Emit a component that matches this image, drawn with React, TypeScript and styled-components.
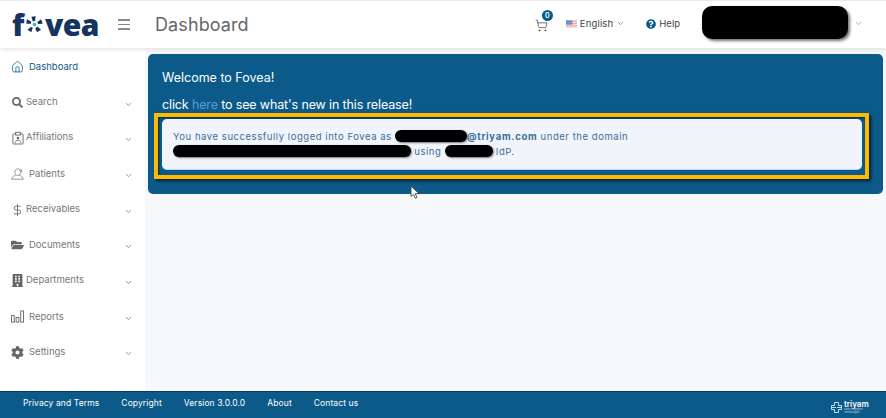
import { ReactNode } from "react";
import styled, { createGlobalStyle } from "styled-components";
import { ChevronDown, DollarSign, Home, ShoppingCart } from "lucide-react";
import {
  FaBuilding,
  FaCog,
  FaFolderOpen,
  FaQuestionCircle,
  FaSearch,
} from "react-icons/fa";

const GlobalStyle = createGlobalStyle`
  html, body {
    margin: 0;
    padding: 0;
    height: 100%;
    background: #f7f8fa;
    font-family: Inter, "Open Sans", sans-serif;
    overflow: hidden;
  }
  * { box-sizing: border-box; }
`;

const AffiliationsIcon = () => (
  <svg width="12" height="14" viewBox="0 0 13 14" fill="none" stroke="#666" strokeWidth="1">
    <rect x="1" y="2.500" width="11" height="11" rx="1" />
    <rect x="4" y="0.800" width="5" height="3" fill="#fff" />
    <circle cx="6.500" cy="7" r="1.400" fill="#666" stroke="none" />
    <path d="M3.500 12c.4-2 1.500-2.600 3-2.600s2.600.6 3 2.600" />
  </svg>
);

const PatientsIcon = () => (
  <svg width="15" height="14" viewBox="0 0 15 14" fill="none" stroke="#777" strokeWidth="0.9">
    <path d="M4.500 5c0-2.500 1.200-4 3.200-4s3.300 1.500 3.300 4c0 2-1.300 3.700-3.300 3.700S4.500 7 4.500 5z" />
    <path d="M5.300 8.300C3.500 9 1.300 10 .8 13h13.200c-.4-3-2.600-4-4.400-4.700" />
    <path d="M10.500 1.500l2.600 1.700M12.200 2.600v2" />
  </svg>
);

const ReportsIcon = () => (
  <svg width="14" height="13" viewBox="0 0 14 13" fill="none" stroke="#666" strokeWidth="1">
    <rect x="0.500" y="5.500" width="3" height="7" />
    <rect x="5.500" y="7.500" width="3" height="5" />
    <rect x="10.500" y="0.500" width="3" height="12" />
  </svg>
);

const LogoMark = () => (
  <svg width="19" height="19" viewBox="0 0 21 21">
    <g fill="#16345f">
      <path d="M8.700 7.300 7 2l4.800-.6-.6 5z" />
      <path d="M13.400 8 17.800 4.600l1.800 4.800-4.700.8z" />
      <path d="M13.700 12.800l4 3.400-4.400 3-2-4.300z" />
      <path d="M8.600 14 7 19.200 2.800 16.400l3.700-3z" />
      <path d="M6.600 9.600 1.400 9.800l.6-5 4.700 2.400z" />
    </g>
    <circle cx="10.500" cy="10.500" r="2" fill="#3fb6b0" />
  </svg>
);

const FlagIcon = () => (
  <svg width="11" height="8" viewBox="0 0 12 8">
    <rect width="12" height="8" fill="#f3a9a0" />
    <rect y="1.600" width="12" height="1.200" fill="#f8e6e3" />
    <rect y="4.200" width="12" height="1.200" fill="#f8e6e3" />
    <rect y="6.800" width="12" height="1.200" fill="#f8e6e3" />
    <rect width="7" height="4.800" fill="#6f94d6" />
  </svg>
);

const CursorIcon = () => (
  <svg width="10" height="15" viewBox="0 0 10 15">
    <path d="M1 1v10.500l2.500-2.200 1.800 4 1.700-.8-1.800-3.800H9z" fill="#fff" stroke="#333" strokeWidth="0.8" />
  </svg>
);

const TriyamMark = () => (
  <svg width="13" height="13" viewBox="0 0 13 13" fill="none" stroke="#dbe8f2" strokeWidth="0.9">
    <path d="M4.500 4.500V1.500h4v3h3v4h-3v3h-4v-3h-3v-4z" />
    <path d="M1 6.500h5M7 6.500h5" />
  </svg>
);

type NavEntry = { label: string; icon: ReactNode; wide?: boolean; active?: boolean; noArrow?: boolean };

const navItems: NavEntry[] = [
  { label: "Dashboard", icon: <Home size={14} strokeWidth={1.4} />, wide: true, active: true, noArrow: true },
  { label: "Search", icon: <FaSearch size={11} /> },
  { label: "Affiliations", icon: <AffiliationsIcon /> },
  { label: "Patients", icon: <PatientsIcon />, wide: true },
  { label: "Receivables", icon: <DollarSign size={14} strokeWidth={1.6} /> },
  { label: "Documents", icon: <FaFolderOpen size={14} />, wide: true },
  { label: "Departments", icon: <FaBuilding size={13} /> },
  { label: "Reports", icon: <ReportsIcon />, wide: true },
  { label: "Settings", icon: <FaCog size={13} />, wide: true },
];

const footerLinks = ["Privacy and Terms", "Copyright", "Version 3.0.0.0", "About", "Contact us"];

const App = () => {
  return (
    <Page>
      <GlobalStyle />
      <Header>
        <Brand>
          <LogoText>
            f<LogoMark />vea
          </LogoText>
        </Brand>
        <MenuButton>
          <span />
          <span />
          <span />
        </MenuButton>
        <Title>Dashboard</Title>
        <HeaderTools>
          <CartWrap>
            <ShoppingCart size={13} strokeWidth={1.4} color="#444" />
            <CartBadge>0</CartBadge>
          </CartWrap>
          <Language>
            <FlagIcon />
            <span>English</span>
            <ChevronDown size={9} color="#777" />
          </Language>
          <Help>
            <FaQuestionCircle size={10} color="#0c5a8a" />
            <span>Help</span>
          </Help>
          <UserBlock>
            <HeaderRedaction />
            <ChevronDown size={9} color="#999" />
          </UserBlock>
        </HeaderTools>
      </Header>

      <Body>
        <Sidebar>
          {navItems.map((item) => (
            <NavRow key={item.label} $active={item.active}>
              <NavIcon $active={item.active}>{item.icon}</NavIcon>
              <NavLabel $wide={item.wide}>{item.label}</NavLabel>
              {!item.noArrow && (
                <NavArrow>
                  <ChevronDown size={9} />
                </NavArrow>
              )}
            </NavRow>
          ))}
        </Sidebar>

        <Main>
          <Banner>
            <Welcome>Welcome to Fovea!</Welcome>
            <Release>
              click <ReleaseLink>here</ReleaseLink> to see what's new in this release!
            </Release>
            <Highlight>
              <Notice>
                You have successfully logged into Fovea as <Redaction $w={72} />
                <strong>@triyam.com</strong> under the domain
                <br />
                <Redaction $w={238} /> using <Redaction $w={48} /> IdP.
              </Notice>
            </Highlight>
          </Banner>
          <Cursor>
            <CursorIcon />
          </Cursor>
        </Main>
      </Body>

      <Footer>
        <FooterLinks>
          {footerLinks.map((link) => (
            <FooterLink key={link}>{link}</FooterLink>
          ))}
        </FooterLinks>
        <Triyam>
          <TriyamMark />
          <TriyamText>
            <TriyamName>triyam</TriyamName>
            <TriyamTag>Data Integration Technologies</TriyamTag>
          </TriyamText>
        </Triyam>
      </Footer>
    </Page>
  );
};

const Page = styled.div`
  width: 886px;
  height: 418px;
  display: flex;
  flex-direction: column;
  overflow: hidden;
`;

const Header = styled.header`
  height: 48px;
  flex: none;
  display: flex;
  align-items: center;
  background: #fff;
  border-top: 1px solid #e8eaee;
  box-shadow: 0 1px 5px rgba(0, 0, 0, 0.12);
  position: relative;
  z-index: 2;
`;

const Brand = styled.div`
  width: 118px;
  padding-left: 12px;
  flex: none;
`;

const LogoText = styled.div`
  display: flex;
  align-items: center;
  gap: 1px;
  font-family: "Open Sans", sans-serif;
  font-weight: 800;
  font-size: 30px;
  line-height: 36px;
  color: #16345f;
  letter-spacing: -0.5px;
`;

const MenuButton = styled.div`
  width: 12px;
  display: flex;
  flex-direction: column;
  gap: 3px;
  flex: none;
  span {
    display: block;
    height: 1.500px;
    background: #8a8a8a;
  }
`;

const Title = styled.h1`
  margin: 0 0 0 25px;
  font-size: 18px;
  font-weight: 400;
  color: #666;
  letter-spacing: 0.1px;
`;

const HeaderTools = styled.div`
  margin-left: auto;
  display: flex;
  align-items: center;
  font-size: 9.500px;
  color: #444;
  margin-top: -2px;
`;

const CartWrap = styled.div`
  position: relative;
  display: flex;
  margin-right: 18px;
  margin-top: 4px;
`;

const CartBadge = styled.span`
  position: absolute;
  top: -9px;
  right: -5px;
  width: 11px;
  height: 11px;
  border-radius: 50%;
  background: #0c5a8a;
  color: #fff;
  font-size: 7px;
  font-weight: 600;
  line-height: 11px;
  text-align: center;
`;

const Language = styled.div`
  display: flex;
  align-items: center;
  gap: 3px;
  margin-right: 21px;
  letter-spacing: 0.15px;
`;

const Help = styled.div`
  display: flex;
  align-items: center;
  gap: 3px;
  margin-right: 22px;
`;

const UserBlock = styled.div`
  display: flex;
  align-items: center;
  gap: 6px;
  margin-right: 23px;
`;

const HeaderRedaction = styled.div`
  width: 146px;
  height: 33px;
  margin-top: -3px;
  border-radius: 10px;
  background: #000;
  box-shadow: 2px 2px 3px rgba(0, 0, 0, 0.55);
`;

const Body = styled.div`
  flex: 1;
  display: flex;
  min-height: 0;
`;

const Sidebar = styled.nav`
  width: 145px;
  flex: none;
  background: #fff;
  padding-top: 1px;
`;

const NavRow = styled.div<{ $active?: boolean }>`
  height: 35.700px;
  display: flex;
  align-items: center;
  padding: 0 12px 0 11px;
  font-size: 9.500px;
  color: ${(props) => (props.$active ? "#0c5a8a" : "#777")};
`;

const NavIcon = styled.span<{ $active?: boolean }>`
  width: 13px;
  display: flex;
  justify-content: center;
  color: ${(props) => (props.$active ? "#0c5a8a" : "#666")};
  flex: none;
`;

const NavLabel = styled.span<{ $wide?: boolean }>`
  margin-left: ${(props) => (props.$wide ? "5px" : "2px")};
  margin-bottom: ${(props) => (props.$wide ? "1px" : "3px")};
`;

const NavArrow = styled.span`
  margin-left: auto;
  display: flex;
  color: #777;
  padding-top: 3px;
`;

const Main = styled.main`
  flex: 1;
  position: relative;
  padding: 6px 3px 0;
  min-width: 0;
`;

const Banner = styled.section`
  height: 140px;
  background: #0c5a8a;
  border-radius: 5px;
  padding: 15px 14px 0 6px;
  color: #fff;
`;

const Welcome = styled.p`
  margin: 0 0 0 8px;
  font-size: 12.500px;
  line-height: 18px;
`;

const Release = styled.p`
  margin: 9px 0 0 8px;
  font-size: 12.500px;
  line-height: 18px;
  letter-spacing: -0.14px;
`;

const ReleaseLink = styled.span`
  color: #5b9bd8;
`;

const Highlight = styled.div`
  margin-top: -1px;
  height: 66px;
  border: 4px solid #ffb900;
  box-shadow: 2px 2px 3px rgba(0, 0, 0, 0.7), inset 1px 1px 2px rgba(0, 0, 0, 0.6);
  padding: 2px 3px 5px 4px;
`;

const Notice = styled.div`
  height: 100%;
  background: #f1f4fb;
  border-radius: 5px;
  border-bottom: 1px solid #b9d6ea;
  padding: 10px 11px;
  font-size: 9.500px;
  line-height: 15px;
  letter-spacing: 0.55px;
  color: #3a6f97;
  strong {
    font-weight: 700;
    letter-spacing: 0.7px;
  }
`;

const Redaction = styled.span<{ $w: number }>`
  display: inline-block;
  width: ${(props) => props.$w}px;
  height: 12px;
  vertical-align: -2px;
  background: #000;
  border-radius: 6px;
  box-shadow: 1px 1px 2px rgba(0, 0, 0, 0.5);
`;

const Cursor = styled.div`
  position: absolute;
  left: 265px;
  top: 137px;
  display: flex;
`;

const Footer = styled.footer`
  height: 27px;
  flex: none;
  display: flex;
  align-items: center;
  justify-content: space-between;
  background: #0c5a8a;
  border-top: 1px solid #083a5c;
  padding: 0 16px 0 23px;
  color: #fff;
`;

const FooterLinks = styled.div`
  display: flex;
  gap: 22px;
  margin-top: -4px;
`;

const FooterLink = styled.span`
  font-size: 8.500px;
  letter-spacing: 0.1px;
`;

const Triyam = styled.div`
  display: flex;
  align-items: center;
  gap: 1px;
  margin-top: 4px;
`;

const TriyamText = styled.div`
  display: flex;
  flex-direction: column;
  width: 26px;
`;

const TriyamName = styled.span`
  font-size: 8px;
  font-weight: 600;
  line-height: 8px;
`;

const TriyamTag = styled.span`
  font-size: 2.500px;
  line-height: 3px;
  opacity: 0.7;
`;

export default App;
